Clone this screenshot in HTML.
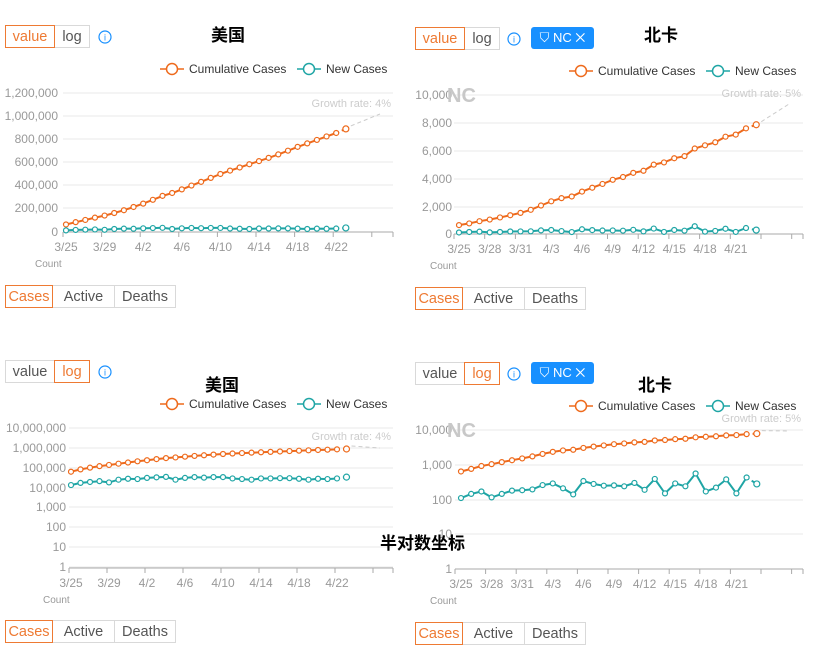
<!DOCTYPE html>
<html><head><meta charset="utf-8"><style>
body{margin:0;width:818px;height:670px;background:#fff;position:relative;overflow:hidden;font-family:"Liberation Sans","Noto Sans CJK SC",sans-serif}
.bg{position:absolute;display:flex;height:23px;font-size:14.5px}
.bg span{border:1px solid #d9d9d9;color:#555;display:flex;align-items:center;justify-content:center;background:#fff;box-sizing:border-box;height:23px}
.bg span.on{border-color:#ee7a33;color:#ee7a33;z-index:1}
.bg span+span{margin-left:-1px}
.v span:nth-child(1){width:50px}.v span:nth-child(2){width:36px}
.c span:nth-child(1){width:48px}.c span:nth-child(2){width:63px}.c span:nth-child(3){width:62px}
.t{position:absolute;font-size:17px;font-weight:bold;color:#000}
.nc{position:absolute;width:63px;height:22px;background:#1890ff;border-radius:3px;color:#fff;font-size:13px;line-height:22px;text-align:center}
svg{position:absolute;left:0;top:0}
</style></head><body>
<div class="bg v" style="left:5px;top:25px"><span class="on">value</span><span>log</span></div>
<div class="bg v" style="left:415px;top:27px"><span class="on">value</span><span>log</span></div>
<div class="bg v" style="left:5px;top:360px"><span>value</span><span class="on">log</span></div>
<div class="bg v" style="left:415px;top:362px"><span>value</span><span class="on">log</span></div>
<div class="nc" style="left:531px;top:27px">⛉ NC ✕</div>
<div class="nc" style="left:531px;top:362px">⛉ NC ✕</div>
<div class="bg c" style="left:5px;top:285px"><span class="on">Cases</span><span>Active</span><span>Deaths</span></div>
<div class="bg c" style="left:415px;top:287px"><span class="on">Cases</span><span>Active</span><span>Deaths</span></div>
<div class="bg c" style="left:5px;top:620px"><span class="on">Cases</span><span>Active</span><span>Deaths</span></div>
<div class="bg c" style="left:415px;top:622px"><span class="on">Cases</span><span>Active</span><span>Deaths</span></div>
<div class="t" style="left:211px;top:21px">美国</div>
<div class="t" style="left:644px;top:21px">北卡</div>
<div class="t" style="left:205px;top:371px">美国</div>
<div class="t" style="left:638px;top:371px">北卡</div>
<svg id="s" width="818" height="670"></svg>
<div class="t" style="left:380px;top:529px">半对数坐标</div>
<script>
var S=document.getElementById('s'),h='';
var O='#ee6a1c',T='#1fa5a5';
var usC=[65,85,104,124,142,164,188,216,245,278,312,337,368,401,433,467,501,530,557,585,612,640,670,702,735,765,795,825,855,890].map(function(v){return v*1000});
var usN=[14,18,20,22,19,26,29,28,32,34,36,26,32,35,33,35,35,30,28,26,30,30,31,31,29,26,29,28,30,35].map(function(v){return v*1000});
var ncC=[640,760,920,1040,1190,1350,1520,1740,2050,2350,2580,2700,3050,3330,3600,3900,4100,4400,4550,4990,5150,5450,5600,6150,6380,6600,7000,7150,7600,7860];
var ncN=[110,145,170,115,145,180,185,195,260,290,210,140,340,280,250,255,240,300,190,390,150,290,240,560,170,220,380,150,430,280];
function txt(x,y,s,a,c,fs,w){h+='<text x="'+x+'" y="'+y+'" font-size="'+(fs||12)+'" fill="'+(c||'#999')+'" text-anchor="'+(a||'start')+'"'+(w?' font-weight="bold"':'')+'>'+s+'</text>';}
function icon(x,y,c){h+='<line x1="'+x+'" y1="'+y+'" x2="'+(x+24)+'" y2="'+y+'" stroke="'+c+'" stroke-width="1.5"/><circle cx="'+(x+12)+'" cy="'+y+'" r="5.5" fill="#fff" stroke="'+c+'" stroke-width="1.5"/>';}
function chart(o){
 o.ticks.forEach(function(t){h+='<line x1="'+o.x0+'" x2="'+o.x1+'" y1="'+t[1]+'" y2="'+t[1]+'" stroke="#e9e9e9"/>';txt(o.lx,t[1]+4,t[0],'end');});
 h+='<line x1="'+o.x0+'" x2="'+o.x1+'" y1="'+o.base+'" y2="'+o.base+'" stroke="#aaa"/>';
 for(var x=o.tk0;x<=o.x1+1;x+=o.tks)h+='<line x1="'+x+'" x2="'+x+'" y1="'+o.base+'" y2="'+(o.base+5)+'" stroke="#aaa"/>';
 h+='<line x1="'+o.x1+'" x2="'+o.x1+'" y1="'+o.base+'" y2="'+(o.base+5)+'" stroke="#aaa"/>';
 o.xl.forEach(function(l,i){txt(o.fx+i*o.step*o.every,o.base+19,l,'middle');});
 txt(o.cx,o.base+35,'Count','start','#999',10);
 [[o.c,O],[o.n,T]].forEach(function(p){var d='',pts=p[0].map(function(v,i){return[o.fx+i*o.step,o.y(v)]});
  for(var i=0;i<pts.length-1;i++)d+=(i?'L':'M')+pts[i][0].toFixed(1)+' '+pts[i][1].toFixed(1);
  h+='<path d="'+d+'" fill="none" stroke="'+p[1]+'" stroke-width="2"/>';
  var a=pts[pts.length-2],b=pts[pts.length-1];
  h+='<line x1="'+a[0]+'" y1="'+a[1]+'" x2="'+b[0]+'" y2="'+b[1]+'" stroke="'+p[1]+'" stroke-width="2" stroke-dasharray="3,3"/>';
  pts.forEach(function(q,i){h+='<circle cx="'+q[0]+'" cy="'+q[1]+'" r="'+(i==pts.length-1?3:2.5)+'" fill="#fff" stroke="'+p[1]+'" stroke-width="1.2"/>';});
  if(p[1]==O)h+='<line x1="'+(b[0]+5)+'" y1="'+(b[1]-3)+'" x2="'+o.gx+'" y2="'+o.gy+'" stroke="#ccc" stroke-dasharray="4,3"/>';
 });
 txt(o.x1-2,o.gty,'Growth rate: '+o.gr,'end','#ccc',11);
 icon(o.lg,o.ly,O);txt(o.lg+29,o.ly+4,'Cumulative Cases','start','#333',12);
 icon(o.lg+137,o.ly,T);txt(o.lg+166,o.ly+4,'New Cases','start','#333',12);
 if(o.wm)txt(o.wm,o.ticks[0][1]+7,'NC','start','#c8c8c8',20,1);
 h+='<circle cx="'+o.ix+'" cy="'+o.iy+'" r="6" fill="none" stroke="#1890ff" stroke-width="1.2"/><text x="'+o.ix+'" y="'+(o.iy+3.5)+'" font-size="9" fill="#1890ff" text-anchor="middle">i</text>';
}
function lg(v){return Math.log(v)/Math.LN10}
chart({x0:63,x1:393,lx:58,base:232,fx:66,step:9.65,every:4,tk0:63,tks:38.6,cx:35,
 ticks:[['1,200,000',93],['1,000,000',116],['800,000',139],['600,000',162],['400,000',185],['200,000',208],['0',232]],
 y:function(v){return 232-v*139/1.2e6},c:usC,n:usN,xl:['3/25','3/29','4/2','4/6','4/10','4/14','4/18','4/22'],
 gx:380,gy:114,gty:107,gr:'4%',lg:160,ly:69,ix:105,iy:37});
chart({x0:454,x1:803,lx:452,base:234,fx:459,step:10.25,every:3,tk0:454,tks:30.7,cx:430,
 ticks:[['10,000',95],['8,000',123],['6,000',151],['4,000',179],['2,000',207],['0',234]],
 y:function(v){return 234-v*139/10000},c:ncC,n:ncN,xl:['3/25','3/28','3/31','4/3','4/6','4/9','4/12','4/15','4/18','4/21'],
 gx:789,gy:104,gty:97,gr:'5%',lg:569,ly:71,ix:514,iy:39,wm:447});
chart({x0:69,x1:393,lx:66,base:568,fx:71,step:9.5,every:4,tk0:69,tks:38,cx:43,
 ticks:[['10,000,000',428],['1,000,000',448],['100,000',468],['10,000',488],['1,000',507],['100',527],['10',547],['1',567]],
 y:function(v){return 568-lg(v)*20},c:usC,n:usN,xl:['3/25','3/29','4/2','4/6','4/10','4/14','4/18','4/22'],
 gx:380,gy:448,gty:440,gr:'4%',lg:160,ly:404,ix:105,iy:372});
chart({x0:455,x1:803,lx:452,base:569,fx:461,step:10.2,every:3,tk0:455,tks:30.6,cx:430,
 ticks:[['10,000',430],['1,000',465],['100',500],['10',534],['1',569]],
 y:function(v){return 569-lg(v)*34.75},c:ncC,n:ncN,xl:['3/25','3/28','3/31','4/3','4/6','4/9','4/12','4/15','4/18','4/21'],
 gx:789,gy:431,gty:422,gr:'5%',lg:569,ly:406,ix:514,iy:374,wm:447});
S.innerHTML=h;
</script>
</body></html>
